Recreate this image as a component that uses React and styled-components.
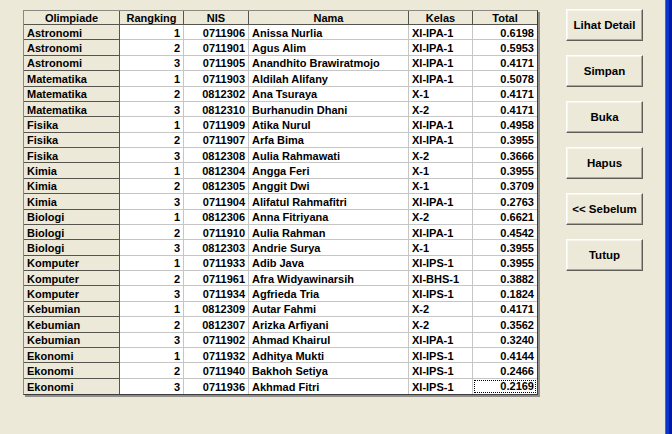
import React from "react";
import styled, { createGlobalStyle } from "styled-components";

const GlobalStyle = createGlobalStyle`
  html, body {
    margin: 0;
    padding: 0;
    background: #ece9d8;
    overflow: hidden;
  }
  body {
    font-family: "Liberation Sans", Arial, sans-serif;
  }
  * { box-sizing: border-box; }
`;

const rows = [
  ["Astronomi", 1, "0711906", "Anissa Nurlia", "XI-IPA-1", "0.6198"],
  ["Astronomi", 2, "0711901", "Agus Alim", "XI-IPA-1", "0.5953"],
  ["Astronomi", 3, "0711905", "Anandhito Brawiratmojo", "XI-IPA-1", "0.4171"],
  ["Matematika", 1, "0711903", "Aldilah Alifany", "XI-IPA-1", "0.5078"],
  ["Matematika", 2, "0812302", "Ana Tsuraya", "X-1", "0.4171"],
  ["Matematika", 3, "0812310", "Burhanudin Dhani", "X-2", "0.4171"],
  ["Fisika", 1, "0711909", "Atika Nurul", "XI-IPA-1", "0.4958"],
  ["Fisika", 2, "0711907", "Arfa Bima", "XI-IPA-1", "0.3955"],
  ["Fisika", 3, "0812308", "Aulia Rahmawati", "X-2", "0.3666"],
  ["Kimia", 1, "0812304", "Angga Feri", "X-1", "0.3955"],
  ["Kimia", 2, "0812305", "Anggit Dwi", "X-1", "0.3709"],
  ["Kimia", 3, "0711904", "Alifatul Rahmafitri", "XI-IPA-1", "0.2763"],
  ["Biologi", 1, "0812306", "Anna Fitriyana", "X-2", "0.6621"],
  ["Biologi", 2, "0711910", "Aulia Rahman", "XI-IPA-1", "0.4542"],
  ["Biologi", 3, "0812303", "Andrie Surya", "X-1", "0.3955"],
  ["Komputer", 1, "0711933", "Adib Java", "XI-IPS-1", "0.3955"],
  ["Komputer", 2, "0711961", "Afra Widyawinarsih", "XI-BHS-1", "0.3882"],
  ["Komputer", 3, "0711934", "Agfrieda Tria", "XI-IPS-1", "0.1824"],
  ["Kebumian", 1, "0812309", "Autar Fahmi", "X-2", "0.4171"],
  ["Kebumian", 2, "0812307", "Arizka Arfiyani", "X-2", "0.3562"],
  ["Kebumian", 3, "0711902", "Ahmad Khairul", "XI-IPA-1", "0.3240"],
  ["Ekonomi", 1, "0711932", "Adhitya Mukti", "XI-IPS-1", "0.4144"],
  ["Ekonomi", 2, "0711940", "Bakhoh Setiya", "XI-IPS-1", "0.2466"],
  ["Ekonomi", 3, "0711936", "Akhmad Fitri", "XI-IPS-1", "0.2169"],
];

const columns = [
  { title: "Olimpiade", align: "left" },
  { title: "Rangking", align: "right" },
  { title: "NIS", align: "right" },
  { title: "Nama", align: "left" },
  { title: "Kelas", align: "left" },
  { title: "Total", align: "right" },
];

const Window = styled.div`
  display: flex;
  width: 100%;
  height: 434px;
  background: #ece9d8;
`;

const Client = styled.div`
  flex: 1;
  min-width: 0;
  display: flex;
  align-items: flex-start;
  padding: 9px 0 0 23px;
`;

/* right edge of the blue XP window frame */
const FrameEdge = styled.div`
  flex: 0 0 7px;
  height: 434px;
  background-color: #0a33cf;
  border-left: 1px solid #3466e6;
  border-right: 3px solid #001b9c;
`;

const Grid = styled.div`
  margin-top: 1px;
  display: grid;
  grid-template-columns: 96px 64px 65px 160px 64px 64px;
  grid-template-rows: 14px repeat(24, 15.375px);
  border: 1px solid;
  border-color: #8c8a80 #3c3c3c #3c3c3c #8c8a80;
  box-shadow: 2px 2px 0 #8f8e88;
  background: #ffffff;
  font-size: 11px;
  font-weight: bold;
  color: #000;
`;

const Cell = styled.div`
  display: flex;
  align-items: center;
  justify-content: ${(p) =>
    p.$align === "right" ? "flex-end" : p.$align === "center" ? "center" : "flex-start"};
  padding: 1px 3px 0 3px;
  white-space: nowrap;
  overflow: hidden;
  border-right: 1px solid ${(p) => (p.$fixed ? "#55544e" : "#c6c6c6")};
  border-bottom: 1px solid ${(p) => (p.$fixed ? "#55544e" : "#c6c6c6")};
  background: ${(p) => (p.$fixed ? "#ece9d8" : "#ffffff")};
  ${(p) => p.$lastCol && "border-right: none;"}
  ${(p) => p.$lastRow && "border-bottom: none;"}
`;

const FocusBox = styled.span`
  display: flex;
  align-items: center;
  justify-content: flex-end;
  margin: -1px -2px 0 -2px;
  padding: 0 1px 0 0;
  width: calc(100% + 4px);
  height: calc(100% - 1px);
  border: 1px dotted #000;
`;

const ButtonColumn = styled.div`
  margin-left: 28px;
  display: flex;
  flex-direction: column;
  gap: 14px;
`;

const Button = styled.button`
  width: 77px;
  height: 32px;
  padding: 0;
  font-family: "Liberation Sans", Arial, sans-serif;
  font-size: 11.5px;
  font-weight: bold;
  color: #000;
  background: #ece9d8;
  border: 1px solid;
  border-color: #ffffff #5e5d57 #5e5d57 #ffffff;
  box-shadow: inset -1px -1px 0 #aca899, inset 1px 1px 0 #f6f5ee;
  cursor: default;
`;

const buttons = ["Lihat Detail", "Simpan", "Buka", "Hapus", "<< Sebelum", "Tutup"];

export default function App() {
  const lastRow = rows.length - 1;
  const lastCol = columns.length - 1;
  return (
    <>
      <GlobalStyle />
      <Window>
        <Client>
          <Grid>
            {columns.map((c, i) => (
              <Cell key={c.title} $fixed $align="center" $lastCol={i === lastCol}>
                {c.title}
              </Cell>
            ))}
            {rows.map((r, ri) =>
              r.map((v, ci) => {
                const focused = ri === lastRow && ci === lastCol;
                return (
                  <Cell
                    key={`${ri}-${ci}`}
                    $fixed={ci === 0}
                    $align={columns[ci].align}
                    $lastCol={ci === lastCol}
                    $lastRow={ri === lastRow}
                  >
                    {focused ? <FocusBox>{v}</FocusBox> : v}
                  </Cell>
                );
              })
            )}
          </Grid>
          <ButtonColumn>
            {buttons.map((b) => (
              <Button key={b}>{b}</Button>
            ))}
          </ButtonColumn>
        </Client>
        <FrameEdge />
      </Window>
    </>
  );
}
